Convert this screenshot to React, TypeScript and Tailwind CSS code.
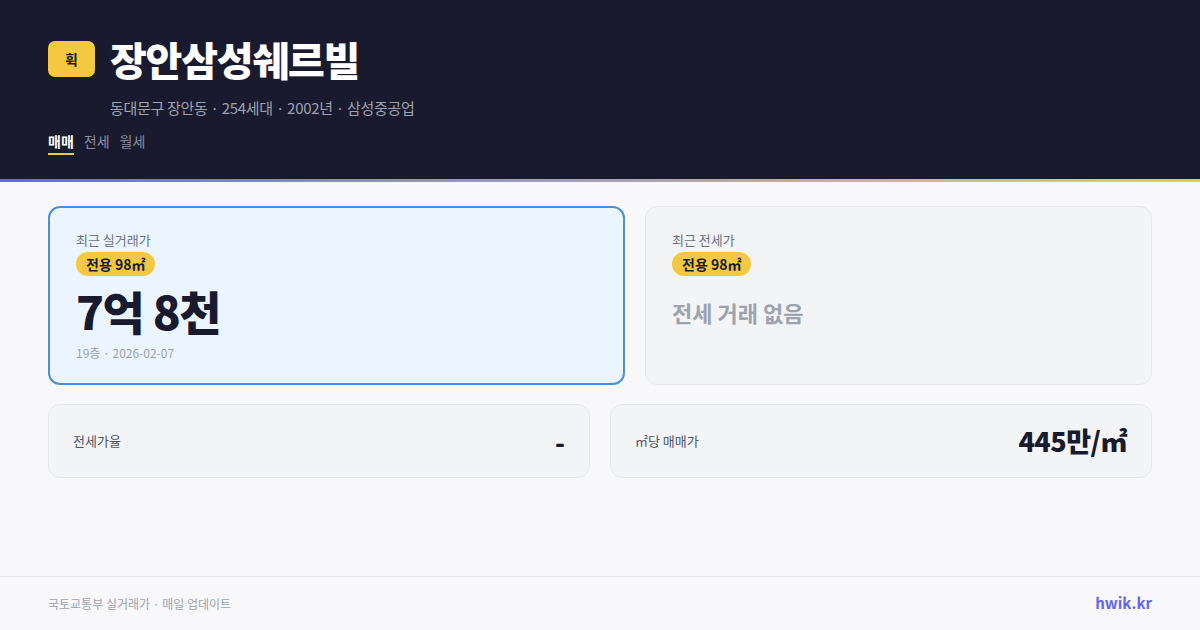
import React from 'react';

const font = { fontFamily: '"Noto Sans CJK KR", "Noto Sans", sans-serif' };

function AreaBadge() {
  return (
    <span className="inline-flex items-center h-[24px] px-[10px] rounded-full bg-[#f5c842] text-[14px] font-bold text-[#1a1a2e] leading-none">
      전용 98㎡
    </span>
  );
}

export default function App() {
  return (
    <div style={font} className="w-[1200px] h-[630px] bg-[#f8f8fa] flex flex-col overflow-hidden">
      {/* Header */}
      <div className="h-[179px] bg-[#1a1a2e] px-[48px] pt-[34px]">
        <div className="flex items-center gap-[15px] h-[50px]">
          <div className="w-[47px] h-[36px] rounded-[7px] bg-[#f5c842] flex items-center justify-center text-[14px] font-bold text-[#1a1a2e]">
            휙
          </div>
          <h1 className="text-[40px] font-black text-white leading-none tracking-[-1.2px]">장안삼성쉐르빌</h1>
        </div>
        <div className="pl-[62px] mt-[13px] text-[15px] text-[#9ca3af] leading-[21px] tracking-[-0.3px]">
          동대문구 장안동 · 254세대 · 2002년 · 삼성중공업
        </div>
        <div className="flex gap-[10px] mt-[13px] text-[14px] leading-[20px]">
          <span className="text-white font-bold border-b-2 border-[#f5c842] pb-[2px]">매매</span>
          <span className="text-[#8b8fa3]">전세</span>
          <span className="text-[#8b8fa3]">월세</span>
        </div>
      </div>
      <div className="h-[3px] bg-gradient-to-r from-[#6366f1] to-[#f5c842]" />

      {/* Body */}
      <div className="flex-1 px-[48px] pt-[24px]">
        <div className="grid grid-cols-[577px_507px] gap-[20px]">
          <div className="h-[179px] rounded-[12px] border-2 border-[#4a90d9] bg-[#ebf5ff] px-[26px] pt-[23px]">
            <div className="text-[13px] text-[#6b7280] leading-[18px]">최근 실거래가</div>
            <div className="mt-[2px]"><AreaBadge /></div>
            <div className="text-[46px] font-black text-[#1a1a2e] leading-[48px] mt-[10px] tracking-[-1.4px]">7억 8천</div>
            <div className="text-[12px] text-[#9ca3af] leading-[16px] mt-[11px]">19층 · 2026-02-07</div>
          </div>
          <div className="h-[179px] rounded-[12px] border border-[#e5e7eb] bg-[#f3f4f6] px-[26px] pt-[24px]">
            <div className="text-[13px] text-[#6b7280] leading-[18px]">최근 전세가</div>
            <div className="mt-[2px]"><AreaBadge /></div>
            <div className="text-[22px] font-bold text-[#9ca3af] leading-[30px] mt-[21px]">전세 거래 없음</div>
          </div>
        </div>

        <div className="grid grid-cols-2 gap-[20px] mt-[19px]">
          <div className="h-[74px] rounded-[12px] border border-[#e5e7eb] bg-[#f3f4f6] px-[24px] flex items-center justify-between">
            <span className="text-[13px] text-[#4b5563]">전세가율</span>
            <span className="text-[26px] font-black text-[#1a1a2e]">-</span>
          </div>
          <div className="h-[74px] rounded-[12px] border border-[#e5e7eb] bg-[#f3f4f6] px-[24px] flex items-center justify-between">
            <span className="text-[13px] text-[#4b5563]">㎡당 매매가</span>
            <span className="text-[27px] font-black text-[#1a1a2e] tracking-[-0.5px]">445만/㎡</span>
          </div>
        </div>
      </div>

      {/* Footer */}
      <div className="h-[54px] border-t border-[#e5e7eb] px-[48px] flex items-center justify-between">
        <span className="text-[12px] text-[#9ca3af]">국토교통부 실거래가 · 매일 업데이트</span>
        <span className="text-[15px] font-bold text-[#6366f1]">hwik.kr</span>
      </div>
    </div>
  );
}
